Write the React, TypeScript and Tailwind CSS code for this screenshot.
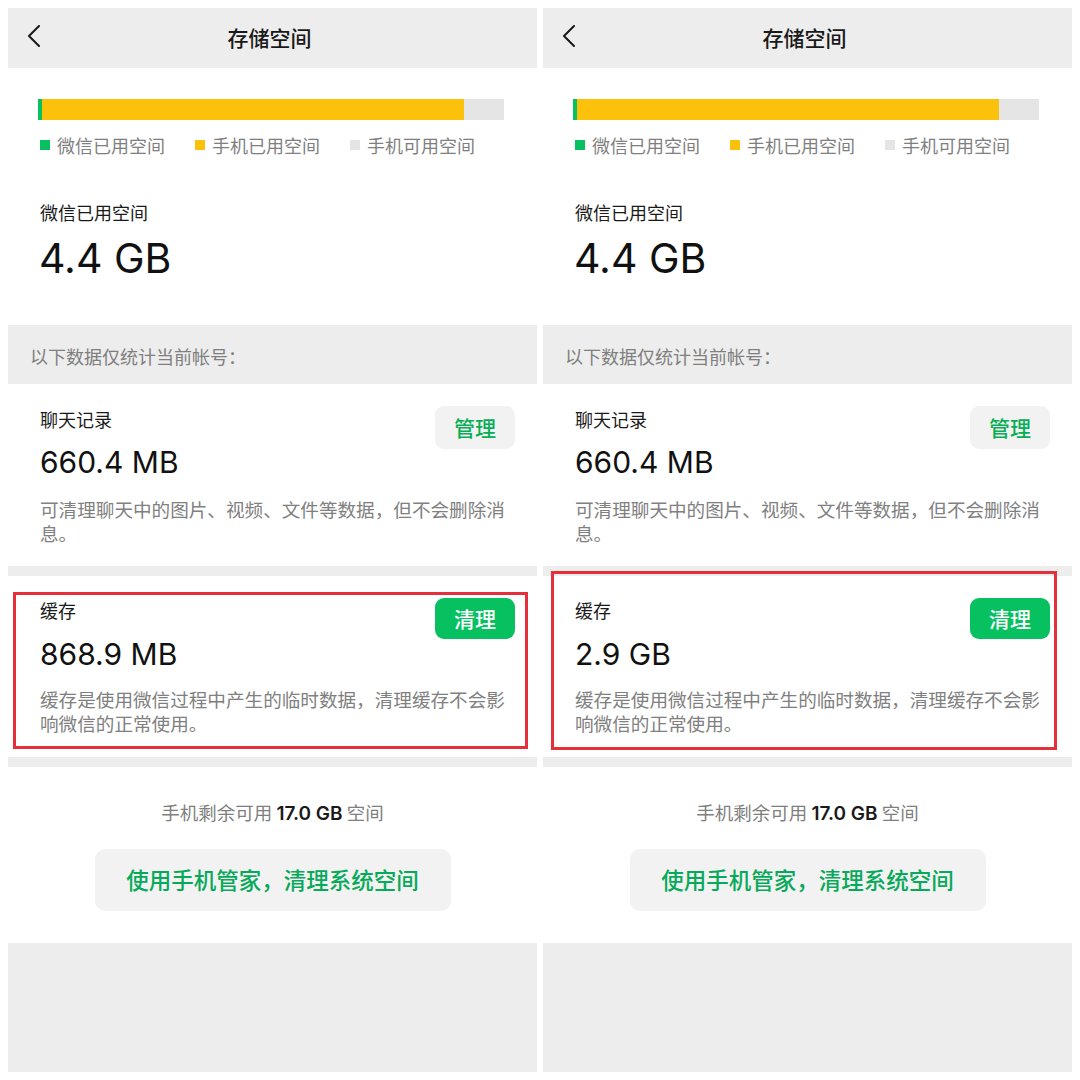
const cjk = { fontFamily: '"Noto Sans CJK SC", "Noto Sans", sans-serif' };
const num = { fontFamily: 'Inter, "Noto Sans CJK SC", sans-serif' };

type Panel = {
  cache: string;
  box: string;
};

const panels: Panel[] = [
  { cache: '868.9 MB', box: 'left-[5px] top-[584px] w-[515px] h-[157px]' },
  { cache: '2.9 GB', box: 'left-[8px] top-[563px] w-[506px] h-[179px]' },
];

function BackIcon() {
  return (
    <svg width="14" height="22" viewBox="0 0 14 22" fill="none">
      <polyline points="12,1 2,11 12,21" stroke="#1a1a1a" strokeWidth="2" strokeLinecap="round" strokeLinejoin="round" />
    </svg>
  );
}

function Legend({ color, label }: { color: string; label: string }) {
  return (
    <div className="flex items-center gap-[7px]">
      <span className={`w-[10px] h-[10px] ${color}`}></span>
      <span className="text-[18px] leading-[24px] text-[#7f7f7f]">{label}</span>
    </div>
  );
}

function StoragePanel({ panel }: { panel: Panel }) {
  return (
    <div className="relative flex-1 flex flex-col bg-white" style={cjk}>
      {/* header */}
      <div className="relative h-[60px] bg-[#ededed] flex items-center justify-center">
        <div className="absolute left-[19px] top-[17px]">
          <BackIcon />
        </div>
        <p className="text-[21px] font-medium text-[#191919] -ml-[6px]">存储空间</p>
      </div>

      {/* usage */}
      <div className="pt-[31px] pb-[42px]">
        <div className="ml-[30px] mr-[33px] h-[21px] flex bg-[#e5e5e5]">
          <div className="w-[4px] bg-[#07c160]"></div>
          <div className="w-[422px] bg-[#fcc10b]"></div>
        </div>
        <div className="mt-[13px] ml-[32px] flex gap-[30px]">
          <Legend color="bg-[#07c160]" label="微信已用空间" />
          <Legend color="bg-[#fcc10b]" label="手机已用空间" />
          <Legend color="bg-[#e5e5e5]" label="手机可用空间" />
        </div>
        <p className="mt-[43px] ml-[32px] text-[18px] leading-[24px] text-[#1a1a1a]">微信已用空间</p>
        <p className="mt-[9px] ml-[31px] text-[41px] leading-[50px] text-[#111]" style={num}>4.4 GB</p>
      </div>

      <div className="h-[60px] bg-[#ededed] flex items-center pl-[22px] pt-[4px]">
        <p className="text-[18px] text-[#7f7f7f]">以下数据仅统计当前帐号：</p>
      </div>

      {/* chat records */}
      <div className="flex pl-[32px] pr-[22px] pt-[23px] pb-[21px]">
        <div className="flex-1">
          <p className="text-[18px] leading-[24px] text-[#1a1a1a]">聊天记录</p>
          <p className="mt-[11px] text-[30px] leading-[40px] text-[#111]" style={num}>660.4 MB</p>
          <p className="mt-[15px] w-[470px] text-[18.6px] leading-[24px] text-[#808080]">可清理聊天中的图片、视频、文件等数据，但不会删除消息。</p>
        </div>
        <button className="absolute right-[22px] mt-[-1px] w-[80px] h-[43px] rounded-[9px] bg-[#f2f2f2] text-[21px] font-medium text-[#06ae56]">管理</button>
      </div>

      <div className="h-[10px] bg-[#ededed]"></div>

      {/* cache */}
      <div className="flex pl-[32px] pr-[22px] pt-[22px] pb-[22px]">
        <div className="flex-1">
          <p className="text-[18px] leading-[24px] text-[#1a1a1a]">缓存</p>
          <p className="mt-[12px] text-[30px] leading-[40px] text-[#111]" style={num}>{panel.cache}</p>
          <p className="mt-[13px] w-[470px] text-[18.6px] leading-[24px] text-[#808080]">缓存是使用微信过程中产生的临时数据，清理缓存不会影响微信的正常使用。</p>
        </div>
        <button className="absolute right-[22px] w-[80px] h-[41px] rounded-[9px] bg-[#07c160] text-[21px] font-medium text-white">清理</button>
      </div>

      <div className="h-[10px] bg-[#ededed]"></div>

      {/* footer */}
      <div className="flex flex-col items-center pt-[33px] pb-[32px]">
        <p className="text-[18.5px] leading-[24px] text-[#7f7f7f]">
          手机剩余可用 <span className="text-[19px] font-semibold text-[#1a1a1a]" style={num}>17.0 GB</span> 空间
        </p>
        <button className="mt-[23px] w-[356px] h-[62px] rounded-[10px] bg-[#f2f2f2] text-[22.5px] font-medium text-[#07a95a]">使用手机管家，清理系统空间</button>
      </div>

      <div className="h-[130px] bg-[#ededed]"></div>

      {/* highlight box */}
      <div className={`absolute ${panel.box} border-[3px] border-[#e52f3b] pointer-events-none`}></div>
    </div>
  );
}

export default function App() {
  return (
    <div className="w-[1080px] h-[1080px] bg-white p-[8px] flex gap-[6px]">
      {panels.map((p) => (
        <StoragePanel key={p.cache} panel={p} />
      ))}
    </div>
  );
}
